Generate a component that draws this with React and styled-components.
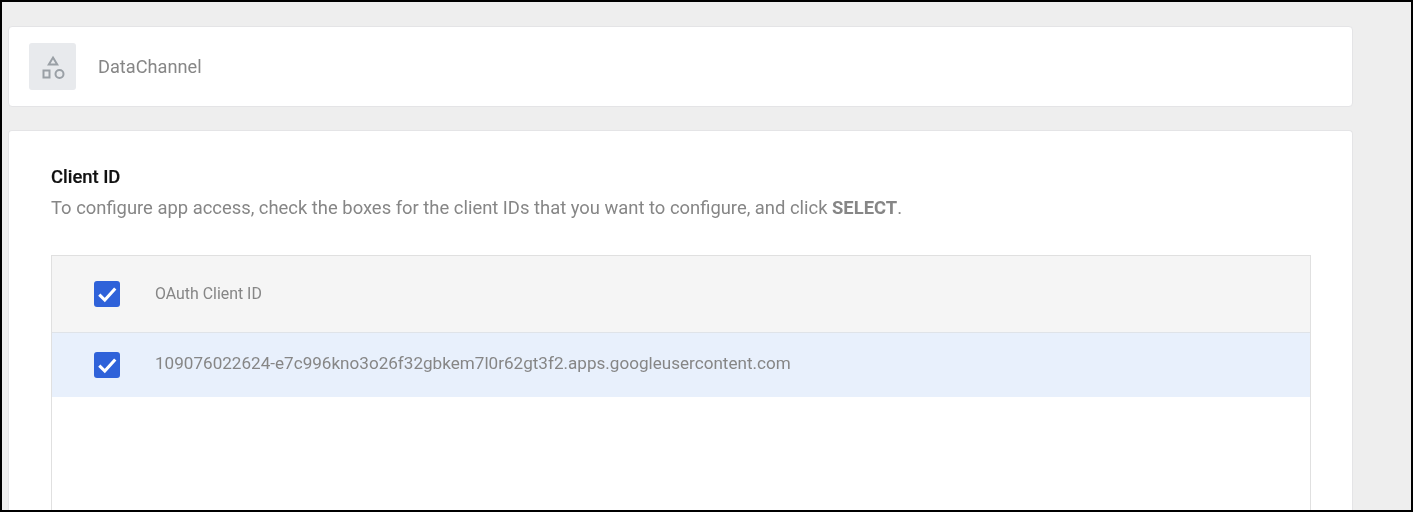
import React from "react";
import styled, { createGlobalStyle, css } from "styled-components";

const GlobalStyle = createGlobalStyle`
  html, body {
    margin: 0;
    padding: 0;
    background: #fff;
  }
  body {
    font-family: Roboto, "Liberation Sans", sans-serif;
  }
`;

// the reference is a slightly soft upscaled capture
const soft = css`
  filter: blur(0.4px);
`;

const Frame = styled.div`
  box-sizing: border-box;
  width: 1413px;
  height: 512px;
  overflow: hidden;
  display: flex;
  flex-direction: column;
  gap: 23px;
  padding: 24px 58px 0 6px;
  background: #eeeeee;
  border: 2px solid #000;
`;

const Card = styled.section`
  box-sizing: border-box;
  background: #fff;
  border: 1px solid #e4e4e6;
  border-radius: 4px;
`;

const HeaderCard = styled(Card)`
  flex: none;
  height: 81px;
  display: flex;
  align-items: center;
  gap: 22px;
  padding: 0 20px;
`;

const IconTile = styled.div`
  width: 47px;
  height: 47px;
  border-radius: 3px;
  background: #e8eaed;
  display: flex;
  align-items: center;
  justify-content: center;
  ${soft}
`;

const AppName = styled.span`
  font-size: 18.2px;
  margin-top: -1px;
  color: #868686;
  ${soft}
`;

const ContentCard = styled(Card)`
  flex: 1;
  min-height: 0;
  border-bottom: 0;
  border-radius: 4px 4px 0 0;
  padding: 36px 41px 0 42px;
  display: flex;
  flex-direction: column;
`;

const Title = styled.h2`
  margin: 0;
  font-size: 18.4px;
  line-height: 20px;
  font-weight: 500;
  color: #111;
  -webkit-text-stroke: 0.2px #111;
  ${soft}
`;

const Hint = styled.p`
  margin: 11px 0 0;
  font-size: 18.4px;
  line-height: 20px;
  color: #868686;
  ${soft}

  strong {
    font-weight: 700;
  }
`;

const Table = styled.div`
  flex: 1;
  margin-top: 37px;
  border: solid #e0e0e0;
  border-width: 1px 1px 0 1px;
`;

const Row = styled.div`
  display: flex;
  align-items: center;
  gap: 35px;
  padding-left: 41px;
  height: ${({ $head }) => ($head ? "76px" : "64px")};
  background: ${({ $head }) => ($head ? "#f5f5f5" : "#e8f0fc")};
  border-bottom: ${({ $head }) => ($head ? "1px solid #dfe3e8" : "0")};
`;

const Check = styled.span`
  flex: none;
  width: 26px;
  height: 26px;
  margin-left: 1px;
  border-radius: 3px;
  background: #2f62d9;
  display: flex;
  align-items: center;
  justify-content: center;
  ${soft}
`;

const HeadLabel = styled.span`
  font-size: 15.9px;
  margin-top: -2px;
  color: #868686;
  ${soft}
`;

const CellText = styled.span`
  font-size: 17.1px;
  margin-top: -4px;
  color: #868686;
  ${soft}
`;

const ShapesIcon = () => (
  <svg width="26" height="26" viewBox="0 0 26 26" fill="none" stroke="#9aa0a6" strokeWidth="2">
    <path d="M13 3.6 L17.2 10.5 H8.8 Z" />
    <rect x="3.5" y="16.5" width="6" height="7" />
    <circle cx="19.5" cy="20" r="4" />
  </svg>
);

const CheckMark = () => (
  <svg width="22" height="22" viewBox="0 0 20 20" fill="none" stroke="#fff" strokeWidth="2.8">
    <path d="M3 10.5 L8 15.5 L17.5 5" />
  </svg>
);

export default function App() {
  return (
    <>
      <GlobalStyle />
      <Frame>
        <HeaderCard>
          <IconTile>
            <ShapesIcon />
          </IconTile>
          <AppName>DataChannel</AppName>
        </HeaderCard>
        <ContentCard>
          <Title>Client ID</Title>
          <Hint>
            To configure app access, check the boxes for the client IDs that you want to configure, and click <strong>SELECT</strong>.
          </Hint>
          <Table>
            <Row $head>
              <Check><CheckMark /></Check>
              <HeadLabel>OAuth Client ID</HeadLabel>
            </Row>
            <Row>
              <Check><CheckMark /></Check>
              <CellText>109076022624-e7c996kno3o26f32gbkem7l0r62gt3f2.apps.googleusercontent.com</CellText>
            </Row>
          </Table>
        </ContentCard>
      </Frame>
    </>
  );
}
